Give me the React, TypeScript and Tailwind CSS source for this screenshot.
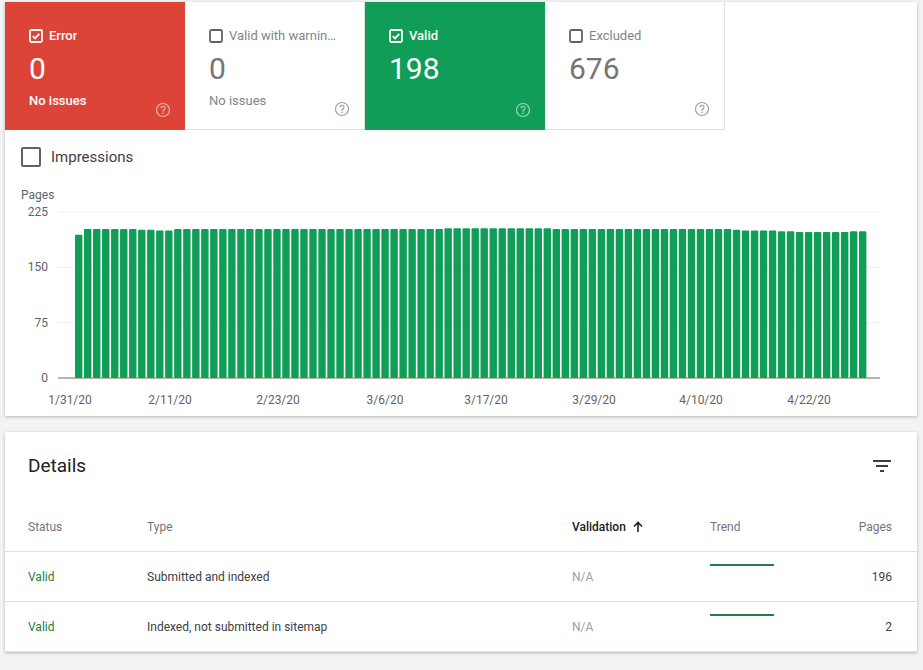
import React from 'react'

const font = { fontFamily: 'Roboto, "Liberation Sans", sans-serif' }

// bar values roughly traced from the screenshot
const values: number[] = [
  194, 202, 202, 202, 202, 202, 202, 201, 201, 200, 200, 202, 202, 202, 202, 202, 202, 202, 202, 202, 202, 202,
  202, 202, 202, 202, 202, 202, 202, 202, 202, 202, 202, 202, 202, 202, 202, 202, 202, 202, 202, 203, 203, 203, 203,
  203, 203, 203, 203, 203, 203, 203, 203, 202, 202, 202, 202, 202, 202, 202, 202, 202, 202, 202, 202, 202, 202, 202,
  202, 202, 202, 202, 202, 201, 200, 200, 200, 200, 199, 199, 198, 198, 198, 198, 198, 198, 199, 199,
]

function Check({ checked, light }: { checked: boolean; light: boolean }) {
  const c = light ? '#fff' : '#5f6368'
  return (
    <svg width="14" height="14" viewBox="0 0 14 14" className="shrink-0">
      <rect x="1" y="1" width="12" height="12" rx="1.5" fill="none" stroke={c} strokeWidth="1.8" />
      {checked && <path d="M3.8 7.2l2.2 2.2 4.3-4.6" fill="none" stroke={c} strokeWidth="1.8" />}
    </svg>
  )
}

function Help({ color }: { color: string }) {
  return (
    <svg width="16" height="16" viewBox="0 0 16 16">
      <circle cx="8" cy="8" r="6.5" fill="none" stroke={color} strokeWidth="1.2" />
      <path d="M6 6.3a2 2 0 1 1 2.8 1.8c-.6.3-.8.7-.8 1.3v.4" fill="none" stroke={color} strokeWidth="1.2" />
      <circle cx="8" cy="11.4" r=".8" fill={color} />
    </svg>
  )
}

function Tile({ label, value, sub, bg, checked }: { label: string; value: string; sub?: string; bg?: string; checked: boolean }) {
  const light = !!bg
  return (
    <div
      className={`relative w-[180px] h-[128px] px-[24px] pt-[24px] ${bg ?? 'bg-white border-r border-b border-[#e0e0e0]'}`}
    >
      <div className={`flex items-center gap-[6px] text-[13px] ${light ? 'text-white font-medium' : 'text-[#80868b]'}`}>
        <Check checked={checked} light={light} />
        <span className="truncate">{label}</span>
      </div>
      <div className={`text-[30px] leading-[36px] mt-[5px] ${light ? 'text-white' : 'text-[#757575]'}`}>{value}</div>
      {sub && <div className={`text-[13px] mt-[4px] ${light ? 'text-white font-medium' : 'text-[#80868b]'}`}>{sub}</div>}
      <div className="absolute right-[14px] bottom-[12px]">
        <Help color={light ? 'rgba(255,255,255,0.6)' : '#9aa0a6'} />
      </div>
    </div>
  )
}

function Chart() {
  const x0 = 75
  const step = (868 - 75) / values.length
  const y0 = 379
  const scale = 166 / 225
  const grid = [225, 150, 75]
  const dates = [
    ['1/31/20', 70],
    ['2/11/20', 170],
    ['2/23/20', 278],
    ['3/6/20', 385],
    ['3/17/20', 486],
    ['3/29/20', 594],
    ['4/10/20', 701],
    ['4/22/20', 809],
  ] as const
  return (
    <svg width="912" height="230" viewBox="5 185 912 230" className="block">
      <text x="21" y="200" fontSize="12" fill="#5f6368" style={font}>Pages</text>
      {grid.map((g) => (
        <g key={g}>
          <line x1="58" x2="880" y1={y0 - g * scale} y2={y0 - g * scale} stroke="#eeeeee" />
          <text x="48" y={y0 - g * scale + 4} fontSize="12" fill="#5f6368" textAnchor="end" style={font}>{g}</text>
        </g>
      ))}
      <text x="48" y={y0 + 4} fontSize="12" fill="#5f6368" textAnchor="end" style={font}>0</text>
      {values.map((v, i) => (
        <rect key={i} x={x0 + i * step} y={y0 - v * scale} width={step - 1.6} height={v * scale} rx="1" fill="#0f9d58" />
      ))}
      <line x1="58" x2="880" y1={y0} y2={y0} stroke="#7a6a3a" strokeWidth="1" />
      {dates.map(([d, x]) => (
        <text key={d} x={x} y="405" fontSize="12" fill="#5f6368" textAnchor="middle" style={font}>{d}</text>
      ))}
    </svg>
  )
}

export default function App() {
  return (
    <div className="w-[923px] h-[670px] overflow-hidden bg-[#f1f3f4] pt-[2px]" style={font}>
      <div className="mx-[5px] w-[912px] bg-white shadow-[0_1px_3px_rgba(0,0,0,0.25)]">
        <div className="flex">
          <Tile label="Error" value="0" sub="No issues" bg="bg-[#db4437]" checked />
          <Tile label="Valid with warnin…" value="0" sub="No issues" checked={false} />
          <Tile label="Valid" value="198" bg="bg-[#0f9d58]" checked />
          <Tile label="Excluded" value="676" checked={false} />
        </div>
        <div className="flex items-center gap-[10px] pl-[16px] h-[54px]">
          <div className="w-[20px] h-[20px] border-2 border-[#5f6368] rounded-[2px]" />
          <span className="text-[15px] text-[#3c4043]">Impressions</span>
        </div>
        <Chart />
        <div className="h-[2px]" />
      </div>

      <div className="mx-[5px] mt-[16px] w-[912px] bg-white shadow-[0_1px_3px_rgba(0,0,0,0.25)]">
        <div className="flex items-center justify-between h-[66px] pl-[23px] pr-[26px] pt-[2px]">
          <span className="text-[19px] text-[#202124]">Details</span>
          <svg width="18" height="12" viewBox="0 0 18 12">
            <rect x="0" y="0" width="18" height="2" fill="#3c4043" />
            <rect x="3" y="5" width="12" height="2" fill="#3c4043" />
            <rect x="7" y="10" width="4" height="2" fill="#3c4043" />
          </svg>
        </div>
        <div className="flex items-center h-[54px] pt-[4px] border-b border-[#e0e0e0] text-[12px] text-[#757575] pl-[23px] pr-[25px]">
          <div className="w-[119px]">Status</div>
          <div className="w-[425px]">Type</div>
          <div className="w-[138px] flex items-center gap-[6px] text-[#202124] font-medium">
            Validation
            <svg width="12" height="12" viewBox="0 0 12 12">
              <path d="M6 11V2M2 5.5L6 1.5l4 4" fill="none" stroke="#202124" strokeWidth="1.6" />
            </svg>
          </div>
          <div className="w-[80px]">Trend</div>
          <div className="flex-1 text-right">Pages</div>
        </div>
        {[
          ['Submitted and indexed', '196'],
          ['Indexed, not submitted in sitemap', '2'],
        ].map(([t, p]) => (
          <div key={t} className="flex items-center h-[50px] border-b border-[#e0e0e0] text-[12px] pl-[23px] pr-[25px]">
            <div className="w-[119px] text-[#188038]">Valid</div>
            <div className="w-[425px] text-[#3c4043]">{t}</div>
            <div className="w-[138px] text-[#9aa0a6]">N/A</div>
            <div className="w-[80px] self-start pt-[12px]">
              <div className="w-[64px] h-[2px] bg-[#1e7e4a]" />
            </div>
            <div className="flex-1 text-right text-[#3c4043]">{p}</div>
          </div>
        ))}
      </div>
    </div>
  )
}
